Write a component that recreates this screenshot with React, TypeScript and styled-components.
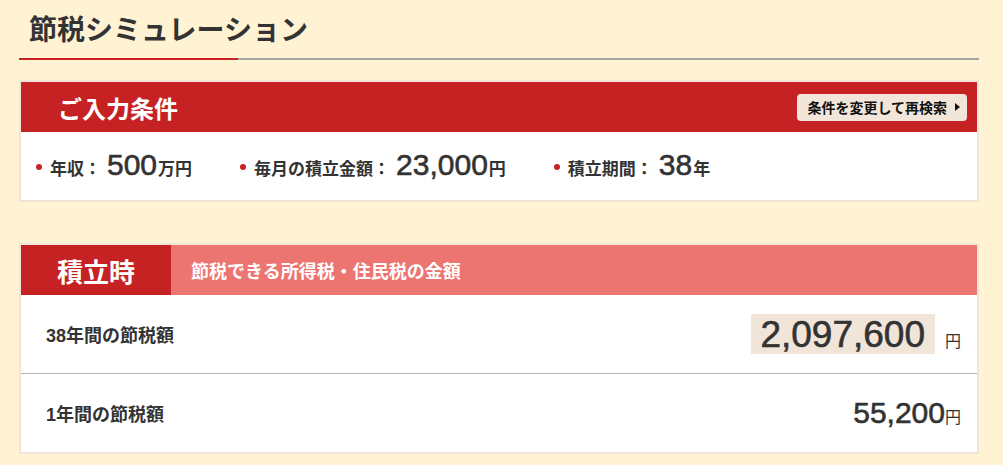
import React from "react";
import styled, { createGlobalStyle } from "styled-components";

const GlobalStyle = createGlobalStyle`
  html, body {
    margin: 0;
    padding: 0;
    background-color: #fff3d4;
  }
  body {
    font-family: "Liberation Sans", "Noto Sans CJK JP", sans-serif;
    color: #333333;
  }
`;

const Page = styled.div`
  width: 960px;
  padding: 0 24px 0 19px;
`;

const Heading = styled.h1`
  margin: 0;
  padding: 11px 0 7px 10px;
  font-size: 28px;
  line-height: 40px;
  font-weight: 700;
  color: #333333;
`;

const HeadingBar = styled.div`
  height: 2px;
  background: linear-gradient(to right, #c62224 219px, #a3a3a3 219px);
`;

const Card = styled.section<{ $top: number }>`
  margin-top: ${(p) => p.$top}px;
  border: 2px solid #f0e5d6;
  background-color: #ffffff;
`;

const RedHeader = styled.div`
  display: flex;
  align-items: center;
  justify-content: space-between;
  height: 50px;
  padding: 0 10px 0 37px;
  background-color: #c62224;
`;

const HeaderTitle = styled.h2`
  margin: 0;
  font-size: 24px;
  font-weight: 700;
  color: #ffffff;
`;

const ResearchButton = styled.button`
  display: flex;
  align-items: center;
  gap: 8px;
  height: 27px;
  padding: 0 7px 0 10px;
  border: none;
  border-radius: 4px;
  background-color: #f2e6da;
  font-family: inherit;
  font-size: 14px;
  font-weight: 700;
  color: #111111;
  cursor: pointer;
`;

const Arrow = styled.span`
  width: 0;
  height: 0;
  border-top: 4px solid transparent;
  border-bottom: 4px solid transparent;
  border-left: 5px solid #111111;
`;

const Conditions = styled.ul`
  display: flex;
  align-items: baseline;
  gap: 48px;
  height: 68px;
  margin: 0;
  padding: 0 0 0 15px;
  list-style: none;
  line-height: 66px;
`;

const Condition = styled.li`
  display: flex;
  align-items: baseline;
  font-size: 17px;
  font-weight: 700;
  &::before {
    content: "";
    width: 6px;
    height: 6px;
    margin-right: 8px;
    border-radius: 50%;
    background-color: #c62224;
    align-self: center;
    transform: translateY(-1px);
  }
`;

const Big = styled.span`
  margin: 0 1px 0 6px;
  font-size: 30px;
  font-weight: 400;
  -webkit-text-stroke: 0.6px #333333;
`;

const TabHeader = styled.div`
  display: flex;
  height: 50px;
`;

const TabLabel = styled.div`
  display: flex;
  align-items: center;
  justify-content: center;
  width: 150px;
  background-color: #c62224;
  font-size: 26px;
  font-weight: 700;
  color: #ffffff;
`;

const TabCaption = styled.div`
  flex: 1;
  display: flex;
  align-items: center;
  padding-left: 20px;
  background-color: #ec7571;
  font-size: 18px;
  font-weight: 700;
  color: #ffffff;
`;

const ResultRow = styled.div<{ $divider?: boolean }>`
  display: flex;
  align-items: center;
  justify-content: space-between;
  height: 78px;
  padding: 0 16px 0 25px;
  border-top: ${(p) => (p.$divider ? "1px solid #b3b3b3" : "none")};
`;

const RowLabel = styled.span`
  font-size: 18px;
  font-weight: 700;
`;

const Amount = styled.div`
  display: flex;
  align-items: baseline;
`;

const HighlightValue = styled.span`
  display: inline-block;
  padding: 0 10px 0 9px;
  height: 40px;
  line-height: 42px;
  background-color: #f1e4d8;
  font-size: 37px;
  -webkit-text-stroke: 0.6px #333333;
`;

const PlainValue = styled.span`
  font-size: 30px;
  -webkit-text-stroke: 0.6px #333333;
`;

const Yen = styled.span<{ $gap?: number }>`
  margin-left: ${(p) => p.$gap ?? 0}px;
  font-size: 16px;
`;

const conditions = [
  { label: "年収：", value: "500", unit: "万円" },
  { label: "毎月の積立金額：", value: "23,000", unit: "円" },
  { label: "積立期間：", value: "38", unit: "年" },
];

const App: React.FC = () => {
  return (
    <Page>
      <GlobalStyle />
      <Heading>節税シミュレーション</Heading>
      <HeadingBar />

      <Card $top={20}>
        <RedHeader>
          <HeaderTitle>ご入力条件</HeaderTitle>
          <ResearchButton type="button">
            条件を変更して再検索
            <Arrow />
          </ResearchButton>
        </RedHeader>
        <Conditions>
          {conditions.map((c) => (
            <Condition key={c.label}>
              {c.label}
              <Big>{c.value}</Big>
              {c.unit}
            </Condition>
          ))}
        </Conditions>
      </Card>

      <Card $top={41}>
        <TabHeader>
          <TabLabel>積立時</TabLabel>
          <TabCaption>節税できる所得税・住民税の金額</TabCaption>
        </TabHeader>
        <ResultRow>
          <RowLabel>38年間の節税額</RowLabel>
          <Amount>
            <HighlightValue>2,097,600</HighlightValue>
            <Yen $gap={10}>円</Yen>
          </Amount>
        </ResultRow>
        <ResultRow $divider>
          <RowLabel>1年間の節税額</RowLabel>
          <Amount>
            <PlainValue>55,200</PlainValue>
            <Yen>円</Yen>
          </Amount>
        </ResultRow>
      </Card>
    </Page>
  );
};

export default App;
